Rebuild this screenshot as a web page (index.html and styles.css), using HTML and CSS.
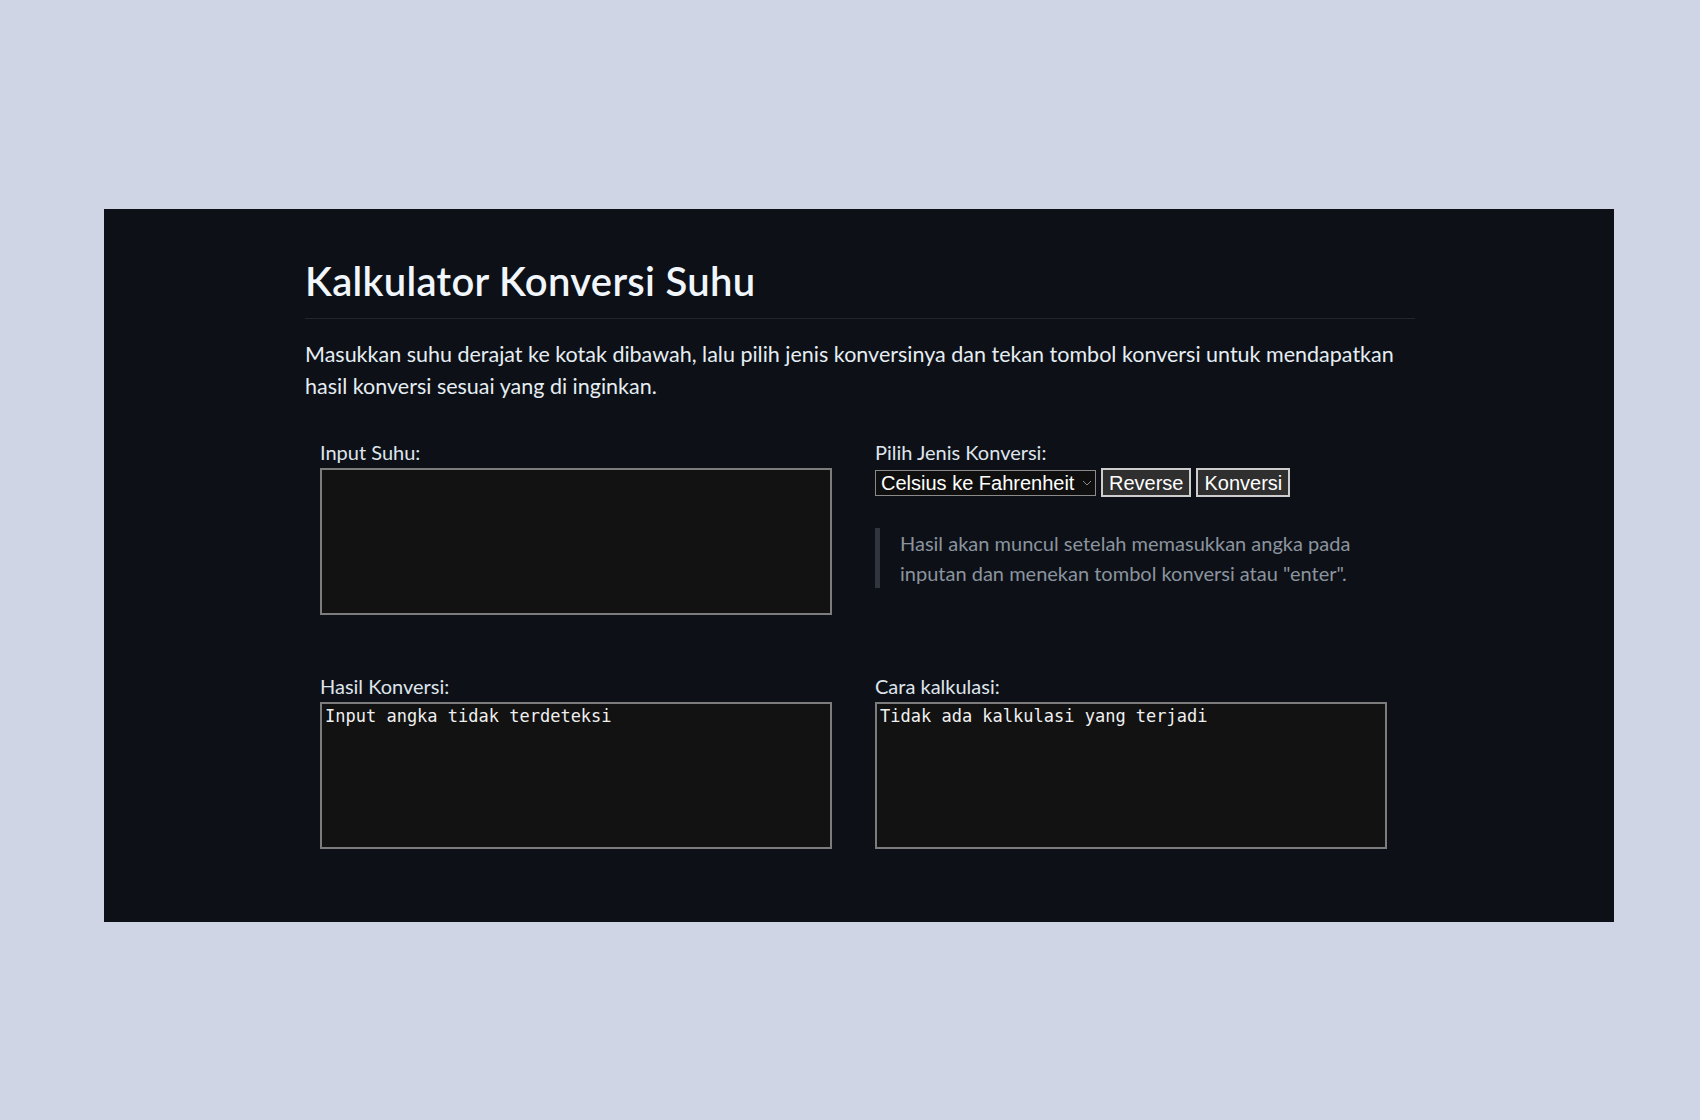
FILE: index.html
```html
<!DOCTYPE html>
<html lang="id">
<head>
<meta charset="utf-8">
<title>Kalkulator Konversi Suhu</title>
<link rel="stylesheet" href="styles.css">
</head>
<body>
<div class="frame">
  <main class="container">
    <h1 class="title">Kalkulator Konversi Suhu</h1>
    <p class="intro">Masukkan suhu derajat ke kotak dibawah, lalu pilih jenis konversinya dan tekan tombol konversi untuk mendapatkan hasil konversi sesuai yang di inginkan.</p>
    <div class="grid">
      <div class="col">
        <label class="lbl" for="input-suhu">Input Suhu:</label>
        <textarea id="input-suhu" class="box"></textarea>
      </div>
      <div class="col">
        <label class="lbl" for="jenis">Pilih Jenis Konversi:</label>
        <div class="controls">
          <div class="select-wrap">
            <select id="jenis" class="select"><option>Celsius ke Fahrenheit</option><option>Fahrenheit ke Celsius</option></select>
            <svg class="chev" width="10" height="6" viewBox="0 0 10 6"><polyline points="1,1 5,5 9,1" fill="none" stroke="#8a8a8a" stroke-width="1"/></svg>
          </div>
          <button class="btn" type="button">Reverse</button>
          <button class="btn" type="button">Konversi</button>
        </div>
        <blockquote class="note">Hasil akan muncul setelah memasukkan angka pada inputan dan menekan tombol konversi atau "enter".</blockquote>
      </div>
      <div class="col">
        <label class="lbl" for="hasil">Hasil Konversi:</label>
        <textarea id="hasil" class="box" readonly>Input angka tidak terdeteksi</textarea>
      </div>
      <div class="col">
        <label class="lbl" for="cara">Cara kalkulasi:</label>
        <textarea id="cara" class="box" readonly>Tidak ada kalkulasi yang terjadi</textarea>
      </div>
    </div>
  </main>
</div>
</body>
</html>
```
FILE: styles.css
```css
html, body {
  margin: 0;
  padding: 0;
}
body {
  background: #cfd5e5;
  padding: 209px 0 0 104px;
  font-family: "Lato", "Open Sans", "Liberation Sans", sans-serif;
  font-size: 20px;
  min-height: 1120px;
  box-sizing: border-box;
}
.frame {
  width: 1510px;
  height: 713px;
  box-sizing: border-box;
  background: #0d1117;
  padding: 47px 0 0 201px;
  color: #e6edf3;
}
.container {
  width: 1110px;
}
.title {
  margin: 0;
  font-size: 40px;
  line-height: 50px;
  font-weight: 600;
  letter-spacing: 0.3px;
  color: #f0f6fc;
  padding-bottom: 12px;
  border-bottom: 1px solid #21262d;
}
.intro {
  margin: 20px 0 0;
  font-size: 21.5px;
  line-height: 31.5px;
  color: #e6edf3;
}
.grid {
  margin-top: 38px;
  display: grid;
  grid-template-columns: 555px 555px;
  row-gap: 59px;
}
.col {
  padding: 0 15px;
  display: flex;
  flex-direction: column;
  align-items: flex-start;
}
.lbl {
  display: block;
  line-height: 24px;
  color: #dfe4ec;
  margin-bottom: 4px;
}
.box {
  width: 512px;
  height: 147px;
  box-sizing: border-box;
  margin: 0;
  background: #121212;
  border: 2px solid #7c7c7c;
  border-radius: 0;
  padding: 1px 3px;
  color: #f0f0f0;
  font-family: "DejaVu Sans Mono", "Liberation Mono", monospace;
  font-size: 17px;
  line-height: 22px;
  resize: none;
  outline: none;
}
.controls {
  display: flex;
  align-items: center;
  gap: 5px;
  height: 29px;
}
.select-wrap {
  position: relative;
  display: flex;
}
.select {
  appearance: none;
  -webkit-appearance: none;
  width: 221px;
  height: 26px;
  box-sizing: border-box;
  margin: 0;
  padding: 0 20px 0 5px;
  background: #0f0f0f;
  border: 1px solid #8a8a8a;
  border-radius: 0;
  color: #ffffff;
  font-family: "Liberation Sans", Arial, sans-serif;
  font-size: 20px;
  line-height: 24px;
}
.chev {
  position: absolute;
  right: 4px;
  top: 10px;
  pointer-events: none;
}
.btn {
  height: 29px;
  box-sizing: border-box;
  margin: 0;
  padding: 0 6px;
  background: #2f2f2f;
  border: 2px solid #cdcdcd;
  border-radius: 0;
  color: #ffffff;
  font-family: "Liberation Sans", Arial, sans-serif;
  font-size: 20px;
  line-height: 24px;
}
.note {
  margin: 31px 0 0;
  padding: 0 20px;
  border-left: 5px solid #30363d;
  color: #8b949e;
  line-height: 30px;
  width: 525px;
  box-sizing: border-box;
}
```
